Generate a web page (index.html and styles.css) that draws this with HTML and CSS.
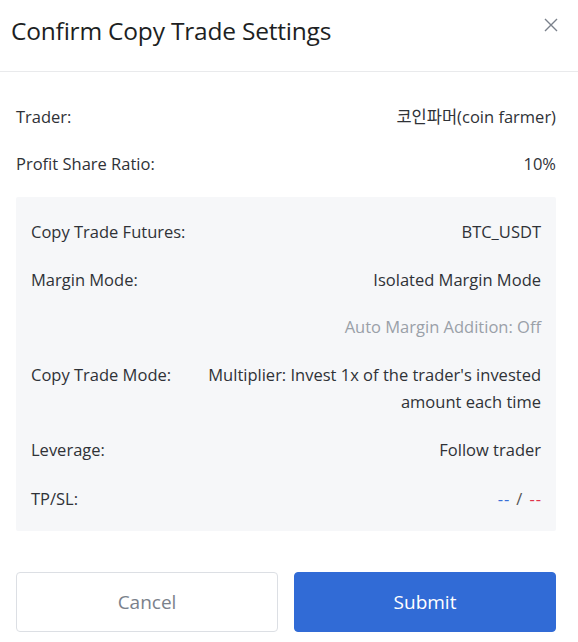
FILE: index.html
```html
<!DOCTYPE html>
<html lang="en">
<head>
<meta charset="utf-8">
<link rel="stylesheet" href="styles.css">
</head>
<body>
<div class="dialog">
  <div class="header">
    <h1 class="title">Confirm Copy Trade Settings</h1>
    <button class="close" aria-label="Close">
      <svg width="14" height="14" viewBox="0 0 14 14"><path d="M1 1L13 13M13 1L1 13" stroke="#7a818b" stroke-width="1.4" fill="none"/></svg>
    </button>
  </div>
  <div class="body">
    <div class="row"><span class="label">Trader:</span><span class="value">코인파머(coin farmer)</span></div>
    <div class="row"><span class="label">Profit Share Ratio:</span><span class="value">10%</span></div>
    <div class="panel">
      <div class="row"><span class="label">Copy Trade Futures:</span><span class="value">BTC_USDT</span></div>
      <div class="row"><span class="label">Margin Mode:</span><span class="value">Isolated Margin Mode</span></div>
      <div class="row"><span class="label"></span><span class="value muted">Auto Margin Addition: Off</span></div>
      <div class="row"><span class="label nowrap">Copy Trade Mode:</span><span class="value wide">Multiplier: Invest 1x of the trader's invested amount each time</span></div>
      <div class="row spaced"><span class="label">Leverage:</span><span class="value">Follow trader</span></div>
      <div class="row spaced"><span class="label">TP/SL:</span><span class="value tpsl"><span class="tp">--</span><span class="sep">/</span><span class="sl">--</span></span></div>
    </div>
  </div>
  <div class="actions">
    <button class="btn cancel">Cancel</button>
    <button class="btn submit">Submit</button>
  </div>
</div>
</body>
</html>
```

FILE: styles.css
```css
* { box-sizing: border-box; }
html, body { margin: 0; padding: 0; background: #fff; }
body { font-family: "Open Sans", "Noto Sans CJK KR", sans-serif; color: #333; }
.dialog { width: 578px; }
.header {
  height: 72px;
  display: flex;
  align-items: flex-start;
  justify-content: space-between;
  padding: 13px 20px 0 11px;
  border-bottom: 1px solid #e9eaec;
}
.title { margin: 0; font-size: 24.5px; font-weight: 400; color: #1d1f23; line-height: 36px; letter-spacing: -0.2px; }
.close { border: 0; background: none; padding: 0; margin-top: 5px; width: 14px; height: 14px; cursor: pointer; }
.close svg { display: block; }
.body { padding: 31px 22px 0 16px; display: flex; flex-direction: column; gap: 20px; }
.row { display: flex; justify-content: space-between; align-items: flex-start; font-size: 16.5px; line-height: 27px; gap: 30px; }
.label { color: #2f3237; }
.nowrap { white-space: nowrap; }
.value { text-align: right; color: #2f3237; }
.value.wide { max-width: 340px; }
.muted { color: #9aa0a8; }
.panel { background: #f6f7f9; padding: 21px 15px 19px 15px; display: flex; flex-direction: column; gap: 20.5px; border-radius: 2px; }
.row.spaced { margin-top: 1px; }
.tpsl { display: flex; gap: 7px; }
.tp, .sl { letter-spacing: 1px; margin-right: -1px; }
.tp { color: #3a6fd8; }
.sl { color: #e0344c; }
.sep { color: #555; }
.actions { display: flex; gap: 16px; padding: 41px 22px 0 16px; }
.btn { flex: 1; height: 60px; border-radius: 4px; font-family: inherit; font-size: 19px; cursor: pointer; }
.cancel { background: #fff; border: 1px solid #dcdfe4; color: #7a818b; }
.submit { background: #316bd6; border: 1px solid #316bd6; color: #fff; }
```
